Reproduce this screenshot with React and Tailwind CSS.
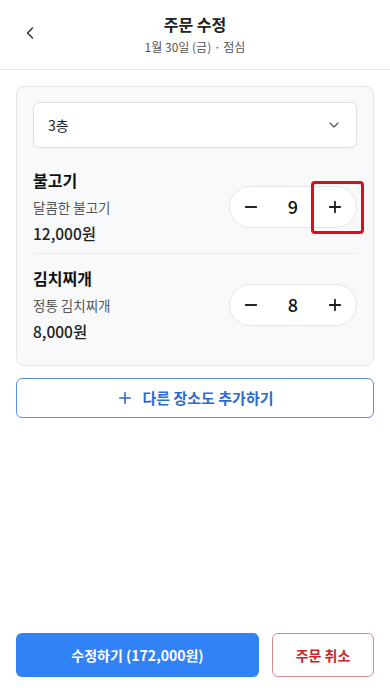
import { ChevronLeft, ChevronDown, Minus, Plus } from 'lucide-react';

const items = [
  { id: 1, name: '불고기', desc: '달콤한 불고기', price: '12,000원', qty: 9, highlight: true },
  { id: 2, name: '김치찌개', desc: '정통 김치찌개', price: '8,000원', qty: 8 },
];

const Stepper = ({ qty, highlight }) => (
  <div className="relative grid h-[42px] w-[128px] grid-cols-3 items-center rounded-full border border-[#e3e5e8] bg-white">
    <button type="button" className="flex h-full items-center justify-center text-[#222]">
      <Minus size={18} strokeWidth={2.4} />
    </button>
    <span className="text-center text-[18px] font-medium text-[#111]">{qty}</span>
    <button type="button" className="flex h-full items-center justify-center text-[#222]">
      <Plus size={18} strokeWidth={2.4} />
    </button>
    {highlight && (
      <div className="pointer-events-none absolute left-[81px] top-[-6px] h-[53px] w-[53px] rounded-[4px] border-[3px] border-[#d3121c]" />
    )}
  </div>
);

const ItemRow = ({ item, last }) => (
  <div className={`flex items-center justify-between pt-3 pb-2 ${last ? '' : 'border-b border-[#e8eaed]'}`}>
    <div>
      <p className="text-[16px] font-bold leading-6 text-[#111]">{item.name}</p>
      <p className="mt-[3px] text-[13.5px] leading-6 text-[#555]">{item.desc}</p>
      <p className="mt-[2px] text-[15.5px] font-medium leading-6 text-[#222]">{item.price}</p>
    </div>
    <Stepper qty={item.qty} highlight={item.highlight} />
  </div>
);

export default function App() {
  return (
    <div
      className="flex h-[693px] flex-col bg-white"
      style={{ fontFamily: '"Noto Sans CJK KR", "Noto Sans", sans-serif' }}
    >
      <header className="relative border-b border-[#e5e7eb] pt-3 pb-3 text-center">
        <button type="button" className="absolute left-[20px] top-[23px] text-[#333]">
          <ChevronLeft size={20} strokeWidth={1.8} />
        </button>
        <h1 className="text-[16px] font-bold leading-6 text-[#222]">주문 수정</h1>
        <p className="mt-[1px] text-[12px] leading-5 text-[#555]">1월 30일 (금) · 점심</p>
      </header>

      <main className="flex-1 px-4 pt-[16px]">
        <div className="rounded-lg border border-[#e3e5e8] bg-[#f8f9fb] px-4 pt-[15px] pb-[14px]">
          <button
            type="button"
            className="flex h-[46px] w-full items-center justify-between rounded-md border border-[#dcdfe3] bg-white px-[14px] text-[14px] text-[#222]"
          >
            <span>3층</span>
            <ChevronDown size={16} strokeWidth={1.8} className="text-[#555]" />
          </button>
          <div className="mt-2">
            {items.map((item, i) => (
              <ItemRow key={item.id} item={item} last={i === items.length - 1} />
            ))}
          </div>
        </div>

        <button
          type="button"
          className="mt-3 flex h-[40px] w-full items-center justify-center gap-2 rounded-md border border-[#5b8ee0] bg-white text-[15px] font-semibold text-[#2b6cd1]"
        >
          <Plus size={18} strokeWidth={2.2} />
          다른 장소도 추가하기
        </button>
      </main>

      <footer className="flex gap-[13px] px-4 pb-4">
        <button
          type="button"
          className="h-[44px] flex-1 rounded-md bg-[#3182f6] text-[14px] font-bold text-white"
        >
          수정하기 (172,000원)
        </button>
        <button
          type="button"
          className="h-[44px] w-[102px] rounded-md border border-[#d98a8d] bg-white text-[14px] font-semibold text-[#c9262c]"
        >
          주문 취소
        </button>
      </footer>
    </div>
  );
}
